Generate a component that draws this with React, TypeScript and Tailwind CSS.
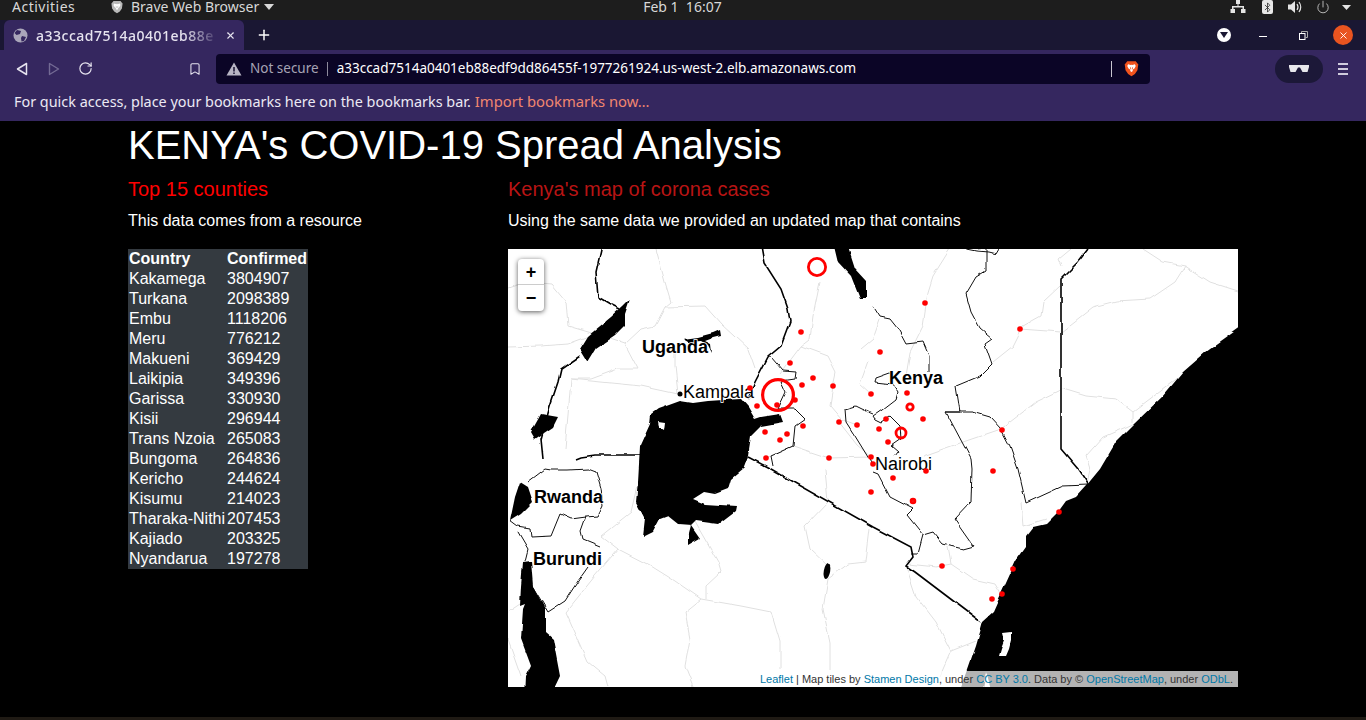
import React from 'react';
import { Bluetooth, Power, RotateCw, Bookmark, Plus, X } from 'lucide-react';

const rows: [string, number][] = [
  ['Kakamega', 3804907], ['Turkana', 2098389], ['Embu', 1118206], ['Meru', 776212], ['Makueni', 369429],
  ['Laikipia', 349396], ['Garissa', 330930], ['Kisii', 296944], ['Trans Nzoia', 265083], ['Bungoma', 264836],
  ['Kericho', 244624], ['Kisumu', 214023], ['Tharaka-Nithi', 207453], ['Kajiado', 203325], ['Nyandarua', 197278],
];

// map-local coordinates, 730x438
const lakes = [
  'M740 73L730 80L698 103L675 123L655 147L628 173L608 193L592 220L578 237L568 248L558 252L550 263L538 275L525 278L518 287L518 298L508 312L503 323L493 345L485 363L475 372L472 383L468 397L460 420L450 448L740 448Z',
  'M143 165L150 160L172 152L185 154L200 152L215 151L233 150L240 158L247 170L253 168L272 165L275 173L253 177L243 187L240 207L235 220L223 230L220 240L207 245L196 243L185 250L197 255L228 257L227 262L210 275L188 272L183 277L192 290L180 297L180 288L183 276L170 275L160 267L152 270L145 283L135 288L137 270L128 253L130 233L132 197L142 175Z',
  'M122 50L117 65L117 77L107 87L88 100L80 113L72 100L80 87L103 68L115 57Z',
  'M33 165L50 168L45 178L27 190L23 183Z',
  'M175 90L190 88L205 84L212 81L213 87L205 89L197 92L203 95L204 104L200 96L193 92L180 93Z',
  'M325 -8L338 -8L347 20L358 32L358 50L352 50L343 27L330 13Z',
  'M12 233L20 238L25 253L13 265L2 272L7 248Z',
  'M15 313L23 312L25 337L37 360L37 383L45 390L52 427L42 448L17 448L18 427L23 417L13 390L15 360L17 355L12 357L13 337Z',
];

const thickBorders = [
  'M95 -8L88 23L90 48L102 55L112 60',
  'M72 107L53 120L50 133L42 157L33 190L35 210',
  'M68 210L73 208L87 206L137 206',
  'M253 -8L257 15L273 40L280 60L282 73L273 97L260 108L247 133L240 150',
  'M240 208L263 220L365 278L403 298L405 308L398 317L407 323L473 373',
  'M580 0L570 13L553 30L553 200L570 220L580 235',
];

const borders = [
  'M20 233L37 220L43 221L60 221L80 220L88 223L93 240L95 257L90 267L78 268L63 270L52 265L43 287L23 288L22 280L10 278L2 272',
  'M78 268L73 282L75 290L92 297',
  'M10 283L20 300L17 312',
  'M80 318L70 332L57 352L40 363L25 338',
  'M478 0L478 22L468 28L458 45L463 63L472 80L484 90L477 95L484 115L472 127L448 137L452 163L438 163L463 210L464 220L463 253L447 270L466 297L455 300L435 295L425 283L415 286L410 305L403 305',
  'M415 286L399 266L405 260L382 248L370 225L365 223',
  'M438 163L465 163L482 168L493 180L502 197L510 220L518 254L555 237L580 236',
  'M365 57L372 68L382 70L390 80L398 95L415 93L421 107L421 123',
  'M382 123L368 128L367 133L385 135L390 143L388 150L375 160L365 167L367 170L373 173L382 167L392 177L393 190L383 197L390 203L387 207',
  'M458 0L468 2L480 3L488 5L491 0',
  'M337 160L338 173L347 187L363 213',
  'M337 160L347 157L353 160L365 165',
  'M263 108L275 122L288 123L287 130L273 132L278 143L270 160L287 160L297 170L287 177L285 197L263 207L265 217',
];

const rivers = [
  'M0 98L33 97L60 95L87 85L117 95',
  'M0 40L20 33L43 35L58 53L60 77L87 85',
  'M148 0L157 33L163 53L157 58L197 57L213 75L240 100L247 120',
  'M157 58L147 77L133 80L117 95L130 120L110 120L83 130L63 130L60 167L57 200',
  'M63 130L133 137L170 145L167 117L167 100',
  'M110 300L143 317L167 332L193 350L233 357L263 363L272 393L272 420',
  'M110 300L93 287L123 263L133 220',
  'M187 273L210 313L213 323L198 337L198 350',
  'M193 350L177 363L182 390L177 417L185 437',
  'M320 330L315 360L322 393L322 420',
  'M320 330L340 315L358 313L362 280',
  'M297 277L302 300L320 317',
  'M297 277L320 253L317 220',
  'M58 363L70 390L80 413L97 427L100 438',
  'M58 363L87 327L110 300',
  'M0 363L15 353L30 390M0 390L13 427',
  'M442 0L425 27L420 43L415 77L402 103L398 127',
  'M552 37L535 53L533 67L515 77L505 97L485 113',
  'M512 80L553 83L585 58L608 52L642 50L667 33L677 17L702 33L730 42',
  'M677 17L655 13L635 0',
  'M553 17L550 10L562 0',
  'M493 180L528 153L555 140L578 147L608 150L625 163L625 173',
  'M625 163L675 125L720 90',
  'M625 175L595 188L578 207L582 220L578 240',
  'M415 207L455 193L493 180',
  'M398 317L408 347L428 373L443 402L468 392',
  'M443 402L432 427',
  'M400 315L428 318L443 315L440 298',
  'M443 315L465 330L487 335L493 345',
  'M513 253L515 277L538 270',
  'M312 33L305 67L302 90L293 97L320 107L328 123L325 137L322 157L333 170L349 176',
  'M293 97L272 125M353 100L365 90L372 70',
  'M360 113L352 135L363 145',
  'M331 173L349 196L363 208',
  'M258 209L285 197L321 209L363 208',
];

const dots: [number, number][] = [
  [293, 83], [282, 114], [305, 129], [294, 136], [325, 137], [363, 145], [242, 139], [249, 157], [269, 156], [287, 151],
  [331, 173], [349, 176], [295, 177], [257, 183], [279, 185], [272, 191], [258, 209], [321, 209], [363, 208], [417, 54],
  [512, 80], [372, 103], [399, 144], [415, 170], [378, 170], [371, 180], [380, 193], [494, 181], [385, 229], [418, 222],
  [485, 222], [551, 263], [434, 317], [505, 320], [494, 345], [484, 350], [363, 243], [365, 215],
];

const labelClass = 'fill-black';
const halo = { paintOrder: 'stroke' } as React.CSSProperties;

const KenyaMap = () => (
  <svg viewBox="0 0 730 438" className="w-full h-full block" style={{ fontFamily: '"Liberation Sans", sans-serif' }}>
    <defs>
      <filter id="rough" filterUnits="userSpaceOnUse" x="-10" y="-10" width="750" height="458" colorInterpolationFilters="sRGB">
        <feTurbulence type="fractalNoise" baseFrequency="0.06" numOctaves="2" seed="4" />
        <feDisplacementMap in="SourceGraphic" scale="4" xChannelSelector="R" yChannelSelector="G" />
      </filter>
    </defs>
    <rect width="730" height="438" fill="#fff" />
    <g filter="url(#rough)">
      {rivers.map((d, i) => <path key={i} d={d} fill="none" stroke="#e0e0e0" strokeWidth="1" />)}
      {borders.map((d, i) => <path key={i} d={d} fill="none" stroke="#111" strokeWidth="1" />)}
      {thickBorders.map((d, i) => <path key={i} d={d} fill="none" stroke="#000" strokeWidth="1.6" />)}
      {lakes.map((d, i) => <path key={i} d={d} fill="#000" />)}
      <ellipse cx="319" cy="322" rx="3.2" ry="8" transform="rotate(10 319 322)" fill="#000" />
      <path d="M494 384L503 383L503 392L501 400L498 407L491 407L493 400L496 392Z" fill="#fff" />
      <path d="M478 422L483 440L475 440Z" fill="#fff" />
      <path d="M150 172L157 173L156 181L151 178Z" fill="#fff" />
    </g>
    <text x="134" y="104" fontSize="18" fontWeight="700" stroke="#fff" strokeWidth="1.5" style={halo} className={labelClass}>Uganda</text>
    <circle cx="172" cy="145" r="2.5" fill="#000" />
    <text x="175" y="149" fontSize="18" stroke="#fff" strokeWidth="1.5" style={halo} className={labelClass}>Kampala</text>
    <text x="381" y="135" fontSize="18" fontWeight="700" stroke="#fff" strokeWidth="1.5" style={halo} className={labelClass}>Kenya</text>
    <text x="367" y="221" fontSize="18" stroke="#fff" strokeWidth="1.5" style={halo} className={labelClass}>Nairobi</text>
    <text x="26" y="254" fontSize="18" fontWeight="700" stroke="#fff" strokeWidth="1.5" style={halo} className={labelClass}>Rwanda</text>
    <text x="25" y="316" fontSize="18" fontWeight="700" stroke="#fff" strokeWidth="1.5" style={halo} className={labelClass}>Burundi</text>
    {dots.map(([x, y], i) => <circle key={i} cx={x} cy={y} r="2.8" fill="#f00" />)}
    <circle cx="309" cy="18" r="8.6" fill="none" stroke="#f00" strokeWidth="2.8" />
    <circle cx="270" cy="146" r="15.4" fill="none" stroke="#f00" strokeWidth="3.2" />
    <circle cx="402" cy="158" r="3.2" fill="none" stroke="#f00" strokeWidth="2.8" />
    <circle cx="393" cy="184" r="5" fill="none" stroke="#f00" strokeWidth="2.8" />
    <circle cx="405" cy="252" r="1.8" fill="#fff" stroke="#f00" strokeWidth="3" />
  </svg>
);

const BraveLion = ({ size = 20, className = '' }: { size?: number; className?: string }) => (
  <svg width={size} height={size} viewBox="0 0 20 20" className={className}>
    <path d="M5 1.5L15 1.5L17 4L18 5L17 12L14 16.5L10 19L6 16.5L3 12L2 5L3 4Z" fill="currentColor" />
    <path d="M6 5L9 6L10 5.5L11 6L14 5L15 7L13.5 10L12 11L11 13.5L10 14L9 13.5L8 11L6.5 10L5 7Z" fill="#fff" />
    <path d="M8 8L9.5 9.5L9.5 12L8.5 10ZM12 8L10.5 9.5L10.5 12L11.5 10Z" fill="currentColor" />
  </svg>
);

const SystemBar = () => (
  <div className="h-5 bg-[#1d1d1d] flex items-center pb-[6px] text-[#d8d8d8] text-[14px] leading-[14px]" style={{ fontFamily: '"Noto Sans", sans-serif' }}>
    <span className="ml-3 w-[98px] tracking-[0.5px]">Activities</span>
    <BraveLion size={14} className="text-[#b9b9b9]" />
    <span className="ml-[7px]">Brave Web Browser</span>
    <svg width="10" height="6" viewBox="0 0 10 6" className="ml-[5px]"><path d="M0 0H10L5 6Z" fill="#d8d8d8" /></svg>
    <span className="ml-[369px]">Feb 1&nbsp;&nbsp;16:07</span>
    <div className="ml-auto mr-[15px] flex items-center">
      <svg width="16" height="14" viewBox="0 0 16 14"><path d="M6 0H10V4H8.5V6H14V9H15.5V13H11V9H12.5V7.5H3.5V9H5V13H0.5V9H2V6H7.5V4H6Z" fill="#e4e4e4" /></svg>
      <span className="ml-[16px] w-[11px] h-[14px] bg-[#e8e8e8] rounded-[2px] flex items-center justify-center">
        <Bluetooth size={13} strokeWidth={1.6} className="text-[#1d1d1d]" />
      </span>
      <svg width="16" height="14" viewBox="0 0 16 14" className="ml-[15px]"><path d="M0 4.5H3L7 1V13L3 9.5H0Z" fill="#e4e4e4" /><path d="M9 4Q11 7 9 10M11 2Q14.5 7 11 12" stroke="#e4e4e4" strokeWidth="1.2" fill="none" /></svg>
      <Power size={14} strokeWidth={1.3} className="ml-[12px] text-[#e4e4e4]" />
      <svg width="9" height="5" viewBox="0 0 9 5" className="ml-[12px]"><path d="M0 0H9L4.5 5Z" fill="#e4e4e4" /></svg>
    </div>
  </div>
);

const TabStrip = () => (
  <div className="h-[30px] bg-[#1a1733] flex items-end pl-1" style={{ fontFamily: '"Noto Sans", sans-serif' }}>
    <div className="w-[240px] h-[30px] bg-[#35275f] rounded-t-md flex items-center pl-[9px] text-[14px] font-medium tracking-[0.5px] text-[#e6e3ef]">
      <svg width="15" height="15" viewBox="0 0 15 15"><circle cx="7.5" cy="7.5" r="7" fill="#aaa6ba" /><path d="M4 2L8 3L7 6L3.5 7L1.5 5ZM9 8L13 9L11 13L8.5 13.5L8 10Z" fill="#35275f" /></svg>
      <span className="ml-[8px] w-[184px] whitespace-nowrap" style={{ maskImage: 'linear-gradient(to right, #000 80%, transparent)' }}>a33ccad7514a0401eb88e</span>
      <X size={11} strokeWidth={2.4} className="ml-[5px] text-[#e6e3ef]" />
    </div>
    <Plus size={16} strokeWidth={2.2} className="ml-[12px] mb-[7px] text-white" />
    <div className="ml-auto mr-[13px] h-[30px] flex items-center">
      <span className="w-[14px] h-[14px] rounded-full bg-white flex items-center justify-center">
        <svg width="8" height="6" viewBox="0 0 8 6"><path d="M0 0H8L4 6Z" fill="#1a1733" /></svg>
      </span>
      <span className="ml-[28px] w-[8px] h-px bg-white mt-[3px]" />
      <svg width="9" height="9" viewBox="0 0 9 9" className="ml-[32px]"><rect x="0.5" y="2.5" width="5.5" height="6" fill="none" stroke="#fff" /><path d="M2.5 2V0.5H8.5V6.5H6.5" fill="none" stroke="#aaa" /></svg>
      <span className="ml-[25px] w-5 h-5 rounded-full bg-[#e95420] flex items-center justify-center">
        <X size={11} strokeWidth={2} className="text-white" />
      </span>
    </div>
  </div>
);

const Toolbar = () => (
  <div className="h-[37px] bg-[#35275f] flex items-center" style={{ fontFamily: '"Noto Sans", sans-serif' }}>
    <svg width="12" height="14" viewBox="0 0 12 14" className="ml-[16px]"><path d="M10.5 1.5V12.5L1.5 7Z" fill="none" stroke="#e6e3ef" strokeWidth="1.5" strokeLinejoin="round" /></svg>
    <svg width="12" height="14" viewBox="0 0 12 14" className="ml-[20px]"><path d="M1.5 1.5V12.5L10.5 7Z" fill="none" stroke="#736a94" strokeWidth="1.4" strokeLinejoin="round" /></svg>
    <RotateCw size={15} strokeWidth={1.9} className="ml-[18px] text-[#e6e3ef]" />
    <Bookmark size={14} strokeWidth={1.8} className="ml-[95px] text-[#e6e3ef]" />
    <div className="ml-[14px] w-[934px] h-[30px] bg-[#0b0526] rounded-[4px] flex items-center text-[13.5px]">
      <svg width="16" height="14" viewBox="0 0 16 14" className="ml-[10px]"><path d="M8 0.5L15.5 13.5H0.5Z" fill="#b8b5c4" /><path d="M7.3 5H8.7V9.5H7.3ZM7.3 10.5H8.7V12H7.3Z" fill="#0b0526" /></svg>
      <span className="ml-[8px] text-[#a6a3b4]">Not secure</span>
      <span className="ml-[8px] w-px h-[14px] bg-[#8d8a9c]" />
      <span className="ml-[9px] text-white">a33ccad7514a0401eb88edf9dd86455f-1977261924.us-west-2.elb.amazonaws.com</span>
      <span className="ml-auto w-px h-[16px] bg-[#c8c6d0]" />
      <BraveLion size={17} className="ml-[11px] mr-[10px] text-[#f1531d]" />
    </div>
    <div className="ml-[125px] w-12 h-7 rounded-full bg-[#1c1838] flex items-center justify-center">
      <svg width="20" height="8" viewBox="0 0 20 8"><path d="M0 0H20V2L18.5 7H13.5L11 2.5H9L6.5 7H1.5L0 2Z" fill="#e8e8ec" /></svg>
    </div>
    <div className="ml-[15px] w-[10px] flex flex-col gap-[3px]">
      <span className="h-[2px] bg-[#cfcbdc]" /><span className="h-[2px] bg-[#cfcbdc]" /><span className="h-[2px] bg-[#cfcbdc]" />
    </div>
  </div>
);

const BookmarksBar = () => (
  <div className="h-[34px] bg-[#35275f] pl-[14px] pb-[5px] flex items-center text-[14.4px] text-[#ece9f4]" style={{ fontFamily: '"Noto Sans", sans-serif' }}>
    For quick access, place your bookmarks here on the bookmarks bar.
    <span className="ml-[4px] text-[14.8px] text-[#f0866f]">Import bookmarks now…</span>
  </div>
);

const CountyTable = () => (
  <table className="bg-[#343a40] text-white text-[16px] leading-5 border-collapse">
    <thead>
      <tr><th className="font-bold text-left px-px">Country</th><th className="font-bold text-left px-px">Confirmed</th></tr>
    </thead>
    <tbody>
      {rows.map(([name, count]) => (
        <tr key={name}><td className="px-px">{name}</td><td className="px-px">{count}</td></tr>
      ))}
    </tbody>
  </table>
);

const MapPanel = () => (
  <div className="relative w-[730px] h-[438px] mt-4 overflow-hidden">
    <KenyaMap />
    <div className="absolute left-[10px] top-[10px] w-[26px] h-[52px] bg-white rounded shadow-[0_1px_5px_rgba(0,0,0,0.65)] flex flex-col text-black font-bold text-[18px] leading-[26px] text-center">
      <span className="h-[26px] border-b border-[#ccc]">+</span>
      <span className="h-[26px]">−</span>
    </div>
    <div className="absolute right-0 bottom-0 h-4 bg-white/70 px-[5px] text-[11px] leading-4 text-[#333]">
      <span className="text-[#0078a8]">Leaflet</span> | Map tiles by <span className="text-[#0078a8]">Stamen Design</span>, under <span className="text-[#0078a8]">CC BY 3.0</span>. Data by © <span className="text-[#0078a8]">OpenStreetMap</span>, under <span className="text-[#0078a8]">ODbL</span>.
    </div>
  </div>
);

export default function App() {
  return (
    <div className="h-[720px] overflow-hidden bg-black flex flex-col">
      <SystemBar />
      <TabStrip />
      <Toolbar />
      <BookmarksBar />
      <main className="flex-1 pl-[128px] text-white" style={{ fontFamily: '"Liberation Sans", sans-serif' }}>
        <h1 className="text-[40px] leading-[48px]">KENYA's COVID-19 Spread Analysis</h1>
        <div className="flex mt-2">
          <section className="w-[380px]">
            <h2 className="text-[20px] leading-6 text-[#ff0000]">Top 15 counties</h2>
            <p className="mt-2 text-[16px] leading-6">This data comes from a resource</p>
            <div className="mt-4"><CountyTable /></div>
          </section>
          <section>
            <h2 className="text-[20px] leading-6 text-[#b81414]">Kenya's map of corona cases</h2>
            <p className="mt-2 text-[16px] leading-6">Using the same data we provided an updated map that contains</p>
            <MapPanel />
          </section>
        </div>
      </main>
      <div className="h-[3px] bg-[#1f1a14]" />
    </div>
  );
}
